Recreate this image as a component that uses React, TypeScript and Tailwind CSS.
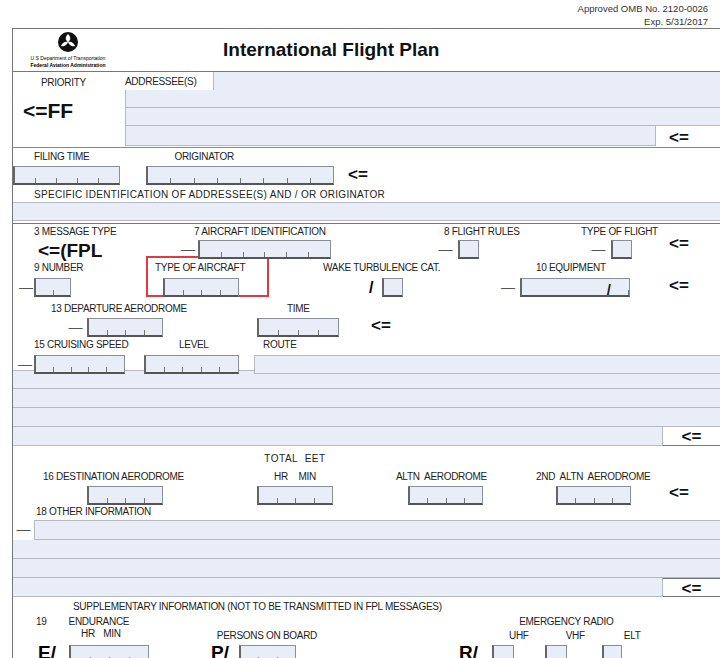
const F = "[font-family:Liberation_Sans,Arial,sans-serif]";

function Box({ w, n = 4, slash = false }: { w: string; n?: number; slash?: boolean }) {
  return (
    <div className={`relative flex h-[19px] items-end border border-b-2 border-l-2 border-[#8a8f96] border-b-[#555] border-l-[#666] bg-[#e9edf8] ${w}`}>
      {Array.from({ length: n }).map((_, i) => (
        <div key={i} className="flex-1 h-[5px] border-r border-[#777] last:border-r-0" />
      ))}
      {slash && <span className="absolute right-[18px] top-0 text-[15px] font-bold text-[#222]">/</span>}
    </div>
  );
}

const Dash = ({ w }: { w: string }) => <div className={`${w} flex justify-center text-[#555] text-[14px] leading-[19px]`}>—</div>;
const Arrow = ({ cls = "" }: { cls?: string }) => <span className={`font-bold text-[17px] leading-[19px] text-[#111] ${cls}`}>&lt;=</span>;
const Field = ({ cls = "" }: { cls?: string }) => <div className={`h-[19px] bg-[#e9edf8] border-b border-[#b4b9c2] ${cls}`} />;
const L = ({ children, cls = "" }: { children: React.ReactNode; cls?: string }) => (
  <div className={`text-[10px] leading-[12px] tracking-[-0.3px] whitespace-nowrap text-[#222] ${cls}`}>{children}</div>
);

export default function App() {
  return (
    <div className={`w-[720px] h-[658px] overflow-hidden bg-white ${F}`}>
      <div className="flex flex-col items-end pr-[12px] pt-[2px] text-[9.5px] leading-[13px] text-[#333]">
        <div>Approved OMB No. 2120-0026</div>
        <div>Exp. 5/31/2017</div>
      </div>
      <div className="ml-[12px] w-[708px] border-t border-l border-[#777]">
        {/* header */}
        <div className="flex h-[43px] items-center border-b border-[#777]">
          <div className="w-[110px] flex flex-col items-center">
            <svg width="22" height="22" viewBox="0 0 22 22">
              <circle cx="11" cy="11" r="10" fill="#111" />
              <path d="M11 3 C8 6 8 9 11 11 C14 9 14 6 11 3Z M4 15 C7 16 10 14 11 11 C8 10 5 12 4 15Z M18 15 C15 16 12 14 11 11 C14 10 17 12 18 15Z" fill="#fff" />
            </svg>
            <div className="text-[5px] leading-[8px] mt-[1px]">U S Department of Transportation</div>
            <div className="text-[5px] leading-[7px] font-bold">Federal Aviation Administration</div>
          </div>
          <div className="ml-[100px] font-bold text-[19px] text-[#111]">International Flight Plan</div>
        </div>
        {/* addressee */}
        <div className="flex h-[76px] border-b border-[#888]">
          <div className="w-[112px] flex flex-col">
            <L cls="pl-[28px] pt-[5px]">PRIORITY</L>
            <div className="pl-[10px] pt-[6px] font-bold text-[21px] text-[#111]">&lt;=FF</div>
          </div>
          <div className="flex-1 flex flex-col">
            <div className="flex h-[18px]">
              <L cls="w-[88px] pt-[4px]">ADDRESSEE(S)</L>
              <Field cls="flex-1 h-[18px] border-l" />
            </div>
            <Field cls="border-l" />
            <Field cls="border-l" />
            <div className="flex">
              <Field cls="w-[531px] h-[20px] border-l border-r" />
              <Arrow cls="ml-[13px] mt-[2px]" />
            </div>
          </div>
        </div>
        {/* filing */}
        <div className="flex h-[15px] items-end">
          <L cls="ml-[21px]">FILING TIME</L>
          <L cls="ml-[85px]">ORIGINATOR</L>
        </div>
        <div className="flex h-[22px] items-end">
          <Box w="w-[107px]" n={5} />
          <Box w="w-[188px] ml-[26px]" n={8} />
          <Arrow cls="ml-[14px] mb-[1px]" />
        </div>
        <L cls="pl-[21px] pt-[4px] h-[17px] tracking-[0.3px]">SPECIFIC IDENTIFICATION OF ADDRESSEE(S) AND / OR ORIGINATOR</L>
        <Field cls="h-[17px] border-t" />
        <div className="h-[3px] border-b border-[#777]" />
        {/* item 3 / 7 / 8 */}
        <div className="flex h-[32px] pt-[2px]">
          <div className="w-[140px] ml-[21px]">
            <L>3 MESSAGE TYPE</L>
            <div className="font-bold text-[19px] leading-[22px] pl-[4px] mt-[2px] text-[#111]">&lt;=(FPL</div>
          </div>
          <div className="w-[153px] ml-[4px]">
            <L cls="pl-[16px]">7 AIRCRAFT IDENTIFICATION</L>
            <div className="flex mt-[2px]"><Dash w="w-[20px]" /><Box w="w-[133px]" n={6} /></div>
          </div>
          <div className="w-[90px] ml-[102px]">
            <L cls="pl-[11px]">8 FLIGHT RULES</L>
            <div className="flex mt-[2px]"><Dash w="w-[25px]" /><Box w="w-[21px]" n={1} /></div>
          </div>
          <div className="w-[88px] ml-[58px]">
            <L>TYPE OF FLIGHT</L>
            <div className="flex mt-[2px] pl-[5px]"><Dash w="w-[25px]" /><Box w="w-[21px]" n={1} /></div>
          </div>
          <Arrow cls="mt-[8px]" />
        </div>
        <div className="flex h-[42px] items-start">
          <div className="w-[110px] ml-[5px] pt-[6px]">
            <L cls="pl-[16px]">9 NUMBER</L>
            <div className="flex mt-[4px]"><Dash w="w-[16px]" /><Box w="w-[37px]" n={2} /></div>
          </div>
          <div className="w-[123px] h-[41px] ml-[18px] border-2 border-[#e0393e] pt-[4px]">
            <L cls="pl-[7px]">TYPE OF AIRCRAFT</L>
            <div className="flex mt-[4px] pl-[15px]"><Box w="w-[76px]" n={4} /></div>
          </div>
          <div className="w-[150px] ml-[54px] pt-[6px]">
            <L>WAKE TURBULENCE CAT.</L>
            <div className="flex mt-[4px] pl-[46px]"><span className="w-[13px] font-bold text-[16px] leading-[19px]">/</span><Box w="w-[21px]" n={1} /></div>
          </div>
          <div className="w-[150px] ml-[23px] pt-[6px]">
            <L cls="pl-[40px]">10 EQUIPMENT</L>
            <div className="flex mt-[4px]"><Dash w="w-[24px]" /><Box w="w-[110px]" n={1} slash /></div>
          </div>
          <Arrow cls="ml-[23px] mt-[20px]" />
        </div>
        <div className="flex h-[38px] items-start">
          <div className="w-[140px] ml-[38px] pt-[5px]">
            <L>13 DEPARTURE AERODROME</L>
            <div className="flex mt-[3px] pl-[13px]"><Dash w="w-[23px]" /><Box w="w-[76px]" n={4} /></div>
          </div>
          <div className="w-[82px] ml-[66px] pt-[5px]">
            <L cls="pl-[30px]">TIME</L>
            <div className="mt-[3px]"><Box w="w-[82px]" n={4} /></div>
          </div>
          <Arrow cls="ml-[32px] mt-[18px]" />
        </div>
        <div className="flex h-[34px] items-start">
          <div className="w-[125px] ml-[3px] pt-[3px]">
            <L cls="pl-[18px]">15 CRUISING SPEED</L>
            <div className="flex mt-[4px]"><Dash w="w-[18px]" /><Box w="w-[91px]" n={5} /></div>
          </div>
          <div className="w-[95px] ml-[3px] pt-[3px]">
            <L cls="pl-[35px]">LEVEL</L>
            <div className="mt-[4px]"><Box w="w-[95px]" n={5} /></div>
          </div>
          <div className="flex-1 ml-[15px] pt-[3px]">
            <L cls="pl-[9px]">ROUTE</L>
            <Field cls="mt-[4px] border-l border-t h-[19px]" />
          </div>
        </div>
        <Field cls="border-t" />
        <Field />
        <Field />
        <div className="flex h-[19px] border-b border-[#777]">
          <Field cls="flex-1 border-r" />
          <div className="w-[57px] flex justify-center"><Arrow /></div>
        </div>
        {/* item 16 */}
        <div className="flex h-[60px] items-start pt-[7px]">
          <div className="w-[200px] ml-[30px] pt-[18px]">
            <L>16 DESTINATION AERODROME</L>
            <div className="ml-[44px] mt-[3px]"><Box w="w-[76px]" n={4} /></div>
          </div>
          <div className="w-[76px] ml-[14px] flex flex-col items-center">
            <L cls="tracking-[0.5px]">TOTAL&nbsp; EET</L>
            <L cls="mt-[6px] [word-spacing:8px]">HR MIN</L>
            <div className="mt-[3px]"><Box w="w-[76px]" n={4} /></div>
          </div>
          <div className="w-[120px] ml-[63px] pt-[18px]">
            <L>ALTN&nbsp; AERODROME</L>
            <div className="ml-[12px] mt-[3px]"><Box w="w-[75px]" n={4} /></div>
          </div>
          <div className="w-[133px] ml-[20px] pt-[18px]">
            <L>2ND&nbsp; ALTN&nbsp; AERODROME</L>
            <div className="ml-[20px] mt-[3px]"><Box w="w-[75px]" n={4} /></div>
          </div>
          <Arrow cls="mt-[30px]" />
        </div>
        <L cls="pl-[23px] h-[14px]">18 OTHER INFORMATION</L>
        <div className="flex"><Dash w="w-[21px]" /><Field cls="flex-1 border-l border-t h-[20px]" /></div>
        <Field />
        <Field cls="h-[18px]" />
        <div className="flex h-[19px] border-b border-[#777]">
          <Field cls="flex-1 border-r" />
          <div className="w-[57px] flex justify-center border-t border-[#777]"><Arrow /></div>
        </div>
        {/* item 19 */}
        <L cls="pl-[60px] pt-[4px]">SUPPLEMENTARY INFORMATION (NOT TO BE TRANSMITTED IN FPL MESSAGES)</L>
        <div className="flex mt-[3px]">
          <L cls="ml-[23px]">19</L>
          <L cls="ml-[22px]">ENDURANCE</L>
          <L cls="ml-[390px]">EMERGENCY RADIO</L>
        </div>
        <div className="flex h-[12px]">
          <L cls="ml-[68px] [word-spacing:6px]">HR MIN</L>
          <L cls="ml-[96px] mt-[2px]">PERSONS ON BOARD</L>
          <L cls="ml-[192px] mt-[2px]">UHF</L>
          <L cls="ml-[37px] mt-[2px]">VHF</L>
          <L cls="ml-[39px] mt-[2px]">ELT</L>
        </div>
        <div className="flex items-start mt-[2px]">
          <span className="ml-[25px] w-[31px] font-bold text-[19px] leading-[22px]">E/</span>
          <div className="mt-[3px]"><Box w="w-[80px]" n={4} /></div>
          <span className="ml-[62px] w-[28px] font-bold text-[19px] leading-[22px]">P/</span>
          <div className="mt-[3px]"><Box w="w-[57px]" n={3} /></div>
          <span className="ml-[163px] w-[33px] font-bold text-[19px] leading-[22px]">R/</span>
          <div className="mt-[3px]"><Box w="w-[22px]" n={1} /></div>
          <div className="mt-[3px] ml-[31px]"><Box w="w-[22px]" n={1} /></div>
          <div className="mt-[3px] ml-[35px]"><Box w="w-[20px]" n={1} /></div>
        </div>
      </div>
    </div>
  );
}
